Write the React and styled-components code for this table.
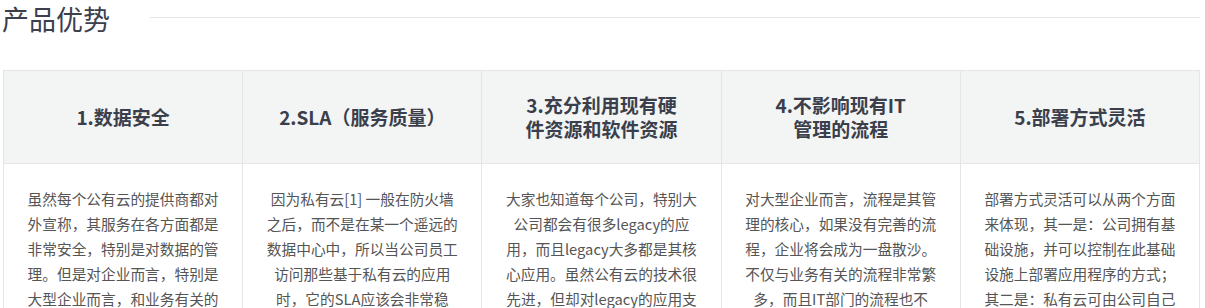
import React from "react";
import styled, { createGlobalStyle } from "styled-components";

const GlobalStyle = createGlobalStyle`
  html, body {
    margin: 0;
    padding: 0;
    background: #fff;
  }
  body {
    font-family: "Noto Sans CJK SC", "Noto Sans", sans-serif;
  }
`;

const ITEMS = [
  {
    title: ["1.数据安全"],
    lines: [
      "虽然每个公有云的提供商都对",
      "外宣称，其服务在各方面都是",
      "非常安全，特别是对数据的管",
      "理。但是对企业而言，特别是",
      "大型企业而言，和业务有关的",
    ],
  },
  {
    title: ["2.SLA（服务质量）"],
    lines: [
      "因为私有云[1] 一般在防火墙",
      "之后，而不是在某一个遥远的",
      "数据中心中，所以当公司员工",
      "访问那些基于私有云的应用",
      "时，它的SLA应该会非常稳",
    ],
  },
  {
    title: ["3.充分利用现有硬", "件资源和软件资源"],
    lines: [
      "大家也知道每个公司，特别大",
      "公司都会有很多legacy的应",
      "用，而且legacy大多都是其核",
      "心应用。虽然公有云的技术很",
      "先进，但却对legacy的应用支",
    ],
  },
  {
    title: ["4.不影响现有IT", "管理的流程"],
    lines: [
      "对大型企业而言，流程是其管",
      "理的核心，如果没有完善的流",
      "程，企业将会成为一盘散沙。",
      "不仅与业务有关的流程非常繁",
      "多，而且IT部门的流程也不",
    ],
  },
  {
    title: ["5.部署方式灵活"],
    lines: [
      "部署方式灵活可以从两个方面",
      "来体现，其一是：公司拥有基",
      "础设施，并可以控制在此基础",
      "设施上部署应用程序的方式；",
      "其二是：私有云可由公司自己",
    ],
  },
];

/* ─── Styled Components ─── */

const Page = styled.div`
  width: 1205px;
  padding-top: 1px;
`;

const SectionHead = styled.div`
  display: flex;
  align-items: flex-start;
  gap: 40px;
  height: 69px;
  padding-right: 5px;
`;

const SectionTitle = styled.h2`
  margin: 0 0 0 2px;
  font-size: 27px;
  line-height: 36px;
  font-weight: 400;
  color: #3b404c;
  white-space: nowrap;
`;

const Rule = styled.div`
  flex: 1;
  height: 1px;
  margin-top: 16px;
  background: #e6e6e6;
`;

const Grid = styled.div`
  display: grid;
  grid-template-columns: repeat(5, 1fr);
  width: 1196px;
  margin-left: 3px;
  border-top: 1px solid #e5e5e5;
  border-left: 1px solid #e5e5e5;
`;

const Column = styled.div`
  display: flex;
  flex-direction: column;
  border-right: 1px solid #e5e5e5;
`;

const HeadCell = styled.div`
  display: flex;
  flex-direction: column;
  align-items: center;
  justify-content: center;
  height: 92px;
  background: #f3f4f4;
  border-bottom: 1px solid #e5e5e5;
  font-size: 19px;
  line-height: 24px;
  font-weight: 700;
  color: #3a3f4b;
  text-align: center;
`;

const BodyCell = styled.div`
  padding: 22px 12px 24px;
  font-size: 14.7px;
  line-height: 25px;
  color: #555;
  text-align: center;
`;

const Line = styled.div`
  white-space: nowrap;
`;

/* ─── Component ─── */

const App = () => (
  <Page>
    <GlobalStyle />
    <SectionHead>
      <SectionTitle>产品优势</SectionTitle>
      <Rule />
    </SectionHead>
    <Grid>
      {ITEMS.map((item) => (
        <Column key={item.title.join("")}>
          <HeadCell>
            {item.title.map((t) => (
              <Line key={t}>{t}</Line>
            ))}
          </HeadCell>
          <BodyCell>
            {item.lines.map((l) => (
              <Line key={l}>{l}</Line>
            ))}
          </BodyCell>
        </Column>
      ))}
    </Grid>
  </Page>
);

export default App;
